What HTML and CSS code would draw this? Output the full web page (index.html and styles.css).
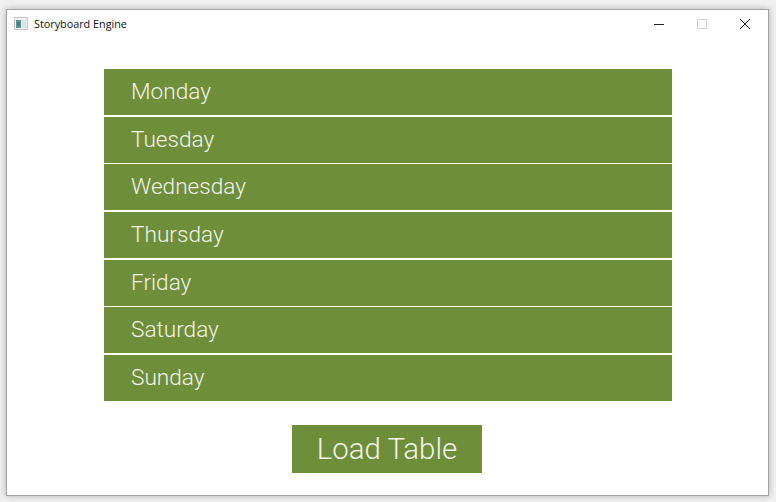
FILE: index.html
```html
<!DOCTYPE html>
<html lang="en">
<head>
<meta charset="utf-8">
<title>Storyboard Engine</title>
<link rel="stylesheet" href="styles.css">
</head>
<body>
<div class="window">
  <header class="titlebar">
    <svg class="app-icon" width="14" height="13" viewBox="0 0 14 13">
      <rect x="0.5" y="0.5" width="13" height="12" fill="#eef0f1" stroke="#c4cacd"/>
      <rect x="2" y="3" width="5" height="8" fill="#5a9a98"/>
      <rect x="8" y="3" width="4" height="8" fill="#d6e4e2"/>
      <rect x="3" y="5" width="3" height="4" fill="#4a7a96"/>
    </svg>
    <span class="title">Storyboard Engine</span>
    <div class="controls">
      <span class="ctl"><svg width="12" height="12" viewBox="0 0 12 12"><path d="M1 6.5H11" stroke="#222" fill="none"/></svg></span>
      <span class="ctl"><svg width="12" height="12" viewBox="0 0 12 12"><rect x="1.5" y="1.5" width="9" height="9" stroke="#d4d4d4" fill="none"/></svg></span>
      <span class="ctl"><svg width="12" height="12" viewBox="0 0 12 12"><path d="M1 1L11 11M11 1L1 11" stroke="#222" fill="none"/></svg></span>
    </div>
  </header>
  <main class="content">
    <ul class="days">
      <li class="day">Monday</li>
      <li class="day">Tuesday</li>
      <li class="day">Wednesday</li>
      <li class="day">Thursday</li>
      <li class="day">Friday</li>
      <li class="day">Saturday</li>
      <li class="day">Sunday</li>
    </ul>
    <button class="load" type="button">Load Table</button>
  </main>
</div>
</body>
</html>
```
FILE: styles.css
```css
html, body {
  margin: 0;
  height: 100%;
}
body {
  box-sizing: border-box;
  width: 776px;
  height: 502px;
  overflow: hidden;
  padding: 9px 7px 6px 6px;
  background: #f1f1f1;
}
.window {
  box-sizing: border-box;
  width: 763px;
  height: 487px;
  background: #fff;
  border: 1.5px solid #a3a3a3;
  box-shadow: 0 0 7px rgba(0, 0, 0, 0.28);
  display: flex;
  flex-direction: column;
}
.titlebar {
  height: 27px;
  display: flex;
  align-items: center;
  padding-left: 7px;
  font-family: "Open Sans", "Noto Sans", sans-serif;
  font-size: 10.8px;
  color: #111;
}
.app-icon { margin-right: 6px; }
.controls {
  margin-left: auto;
  display: flex;
  padding-right: 2px;
}
.ctl {
  width: 43px;
  height: 27px;
  display: flex;
  align-items: center;
  justify-content: center;
}
.ctl svg { display: block; }
.content {
  flex: 1;
  display: flex;
  flex-direction: column;
  align-items: center;
  padding-top: 32px;
}
.days {
  list-style: none;
  margin: 0 0 0 1px;
  padding: 0;
  width: 568px;
  display: flex;
  flex-direction: column;
  gap: 1.65px;
}
.day {
  box-sizing: border-box;
  height: 46px;
  padding-left: 27px;
  background: #6f8e3a;
  color: #f1f4e8;
  font-family: Roboto, sans-serif;
  font-weight: 300;
  font-size: 22.6px;
  line-height: 45px;
}
.load {
  margin: 24px 1px 0 0;
  width: 190px;
  height: 48px;
  border: 0;
  padding: 0;
  background: #6f8e3a;
  color: #f1f4e8;
  font-family: Roboto, sans-serif;
  font-weight: 300;
  font-size: 29.4px;
}
```
